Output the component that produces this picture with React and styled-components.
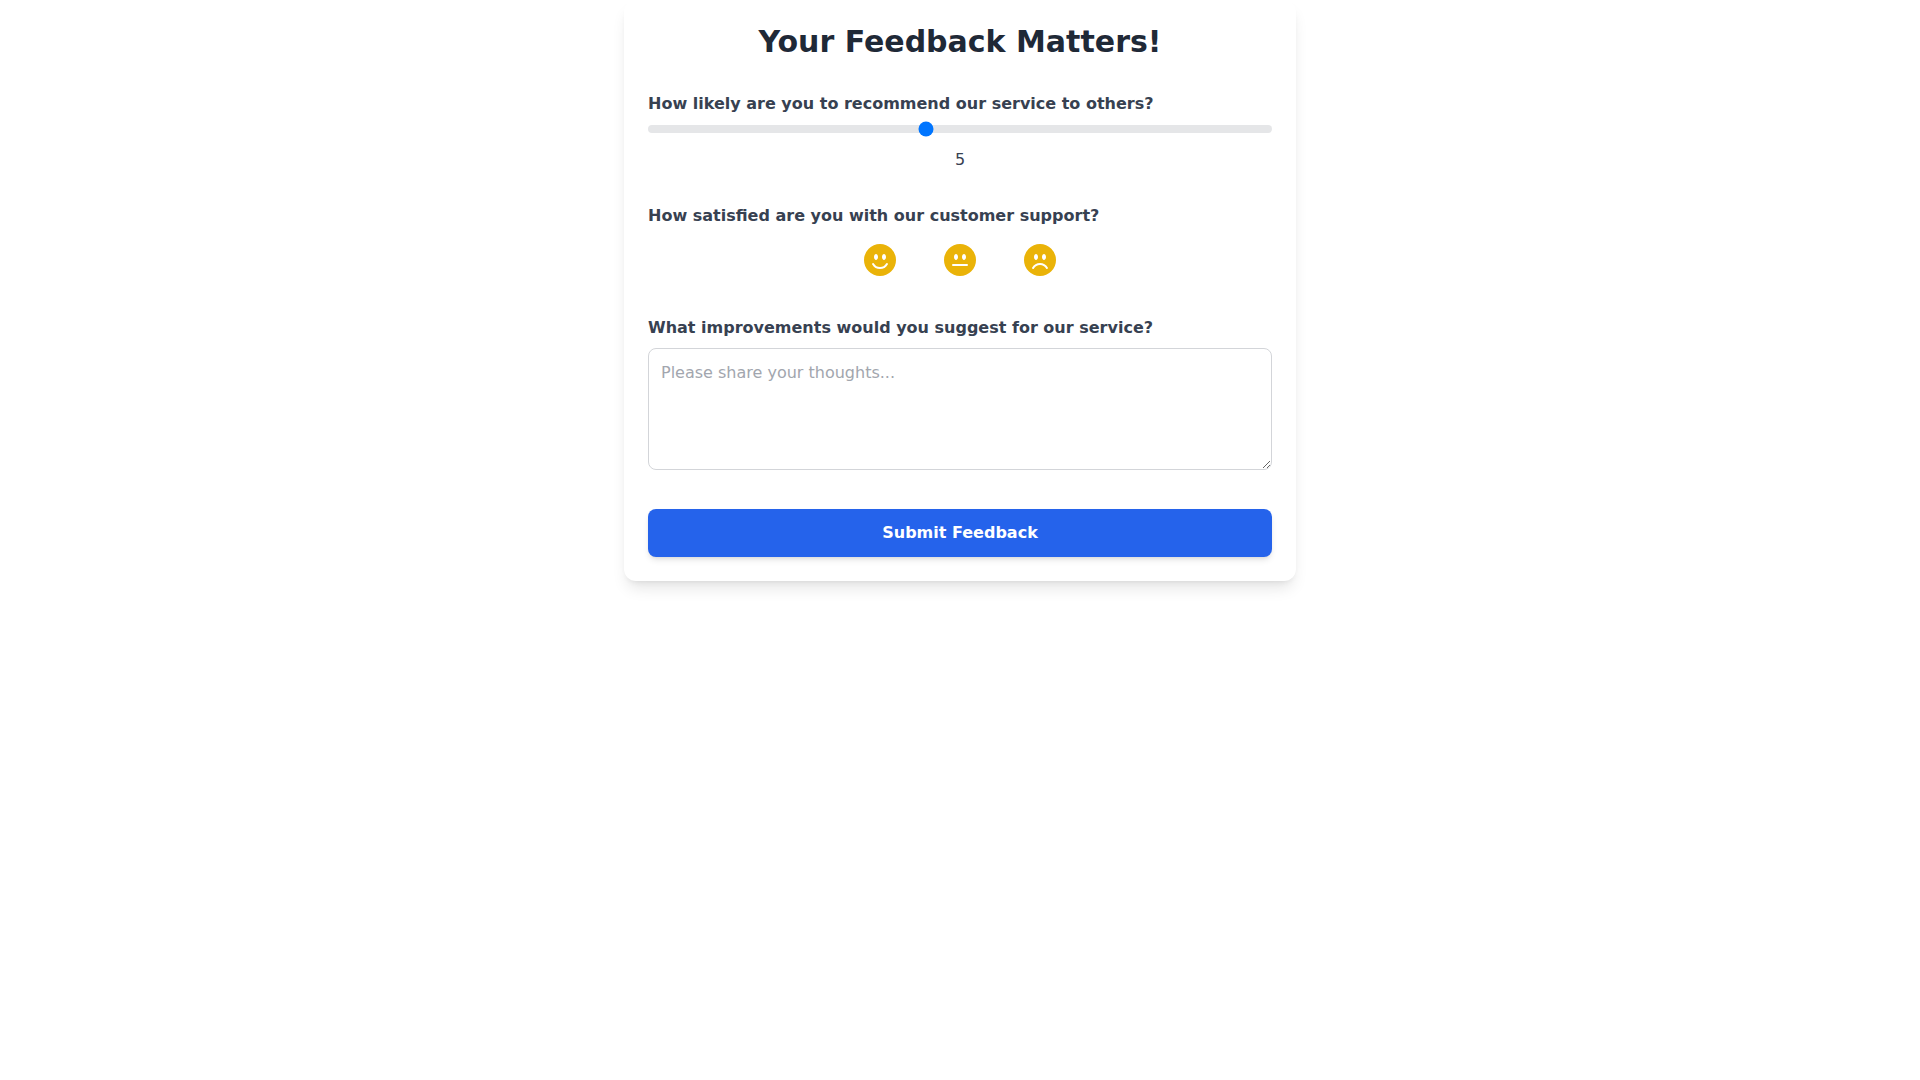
import React, { useState } from 'react'
import styled, { createGlobalStyle } from 'styled-components'
import { BsEmojiSmileFill, BsEmojiNeutralFill, BsEmojiFrownFill } from 'react-icons/bs'

const GlobalStyle = createGlobalStyle`
	*, *::before, *::after {
		box-sizing: border-box;
	}
	body {
		min-height: 100vh;
		margin: 0;
		background-color: #fff;
		font-family: "DejaVu Sans", sans-serif;
		font-size: 16px;
		line-height: 24px;
	}
`

const Card = styled.main`
	max-width: 672px;
	margin: 0 auto;
	padding: 24px;
	background-color: #fff;
	border-radius: 12px;
	box-shadow: 0 10px 15px -3px rgba(0, 0, 0, 0.1), 0 4px 6px -4px rgba(0, 0, 0, 0.1);
`

const Title = styled.h1`
	margin: 0 0 32px;
	color: #1f2937;
	font-size: 30px;
	font-weight: bold;
	line-height: 36px;
	text-align: center;
`

const Section = styled.section`
	margin-bottom: 32px;
`

const Label = styled.label`
	display: block;
	margin-bottom: 8px;
	color: #374151;
	font-weight: 600;
`

const Slider = styled.input`
	appearance: none;
	display: block;
	width: 100%;
	height: 8px;
	margin: 9px 0 15px;
	border-radius: 8px;
	background-color: #e5e6e8;
	cursor: pointer;
`

const Score = styled.output`
	display: block;
	color: #374151;
	text-align: center;
`

const Faces = styled.div`
	display: flex;
	justify-content: center;
	gap: 32px;
`

const FaceButton = styled.button`
	display: flex;
	padding: 8px;
	border: none;
	border-radius: 50%;
	background: transparent;
	color: #eab308;
	font-size: 32px;
	cursor: pointer;
`

const Comment = styled.textarea`
	width: 100%;
	padding: 12px;
	border: 1px solid #d3d5d9;
	border-radius: 8px;
	background-color: #fff;
	color: #374151;
	font: inherit;
	resize: vertical;
	&::placeholder {
		color: #a2a6ae;
	}
`

const SubmitButton = styled.button`
	display: block;
	width: 100%;
	padding: 12px 24px;
	border: none;
	border-radius: 8px;
	background-color: #2563eb;
	box-shadow: 0 4px 6px -1px rgba(0, 0, 0, 0.1), 0 2px 4px -2px rgba(0, 0, 0, 0.1);
	color: #fff;
	font: inherit;
	font-weight: 600;
	cursor: pointer;
	&:hover {
		background-color: #1d4ed8;
	}
`

const faces = [
	{ name: 'Satisfied', Icon: BsEmojiSmileFill },
	{ name: 'Neutral', Icon: BsEmojiNeutralFill },
	{ name: 'Dissatisfied', Icon: BsEmojiFrownFill }
]

const App = () => {
	const [score, setScore] = useState(5)
	const [face, setFace] = useState(null)
	const [comment, setComment] = useState('')

	return (
		<>
			<GlobalStyle/>
			<Card>
				<Title>Your Feedback Matters!</Title>
				<form onSubmit={(e) => e.preventDefault()}>
					<Section>
						<Label htmlFor='score'>How likely are you to recommend our service to others?</Label>
						<Slider
							id='score'
							type='range'
							min='1'
							max='10'
							value={score}
							onChange={(e) => setScore(e.target.value)}/>
						<Score htmlFor='score'>{score}</Score>
					</Section>
					<Section>
						<Label as='div' id='support'>How satisfied are you with our customer support?</Label>
						<Faces role='group' aria-labelledby='support'>
							{faces.map(({ name, Icon }) => (
								<FaceButton
									key={name}
									type='button'
									aria-label={name}
									aria-pressed={face === name}
									onClick={() => setFace(name)}>
									<Icon/>
								</FaceButton>
							))}
						</Faces>
					</Section>
					<Section>
						<Label htmlFor='comment'>What improvements would you suggest for our service?</Label>
						<Comment
							id='comment'
							rows='4'
							placeholder='Please share your thoughts...'
							value={comment}
							onChange={(e) => setComment(e.target.value)}/>
					</Section>
					<SubmitButton type='submit'>Submit Feedback</SubmitButton>
				</form>
			</Card>
		</>
	)
}

export default App
